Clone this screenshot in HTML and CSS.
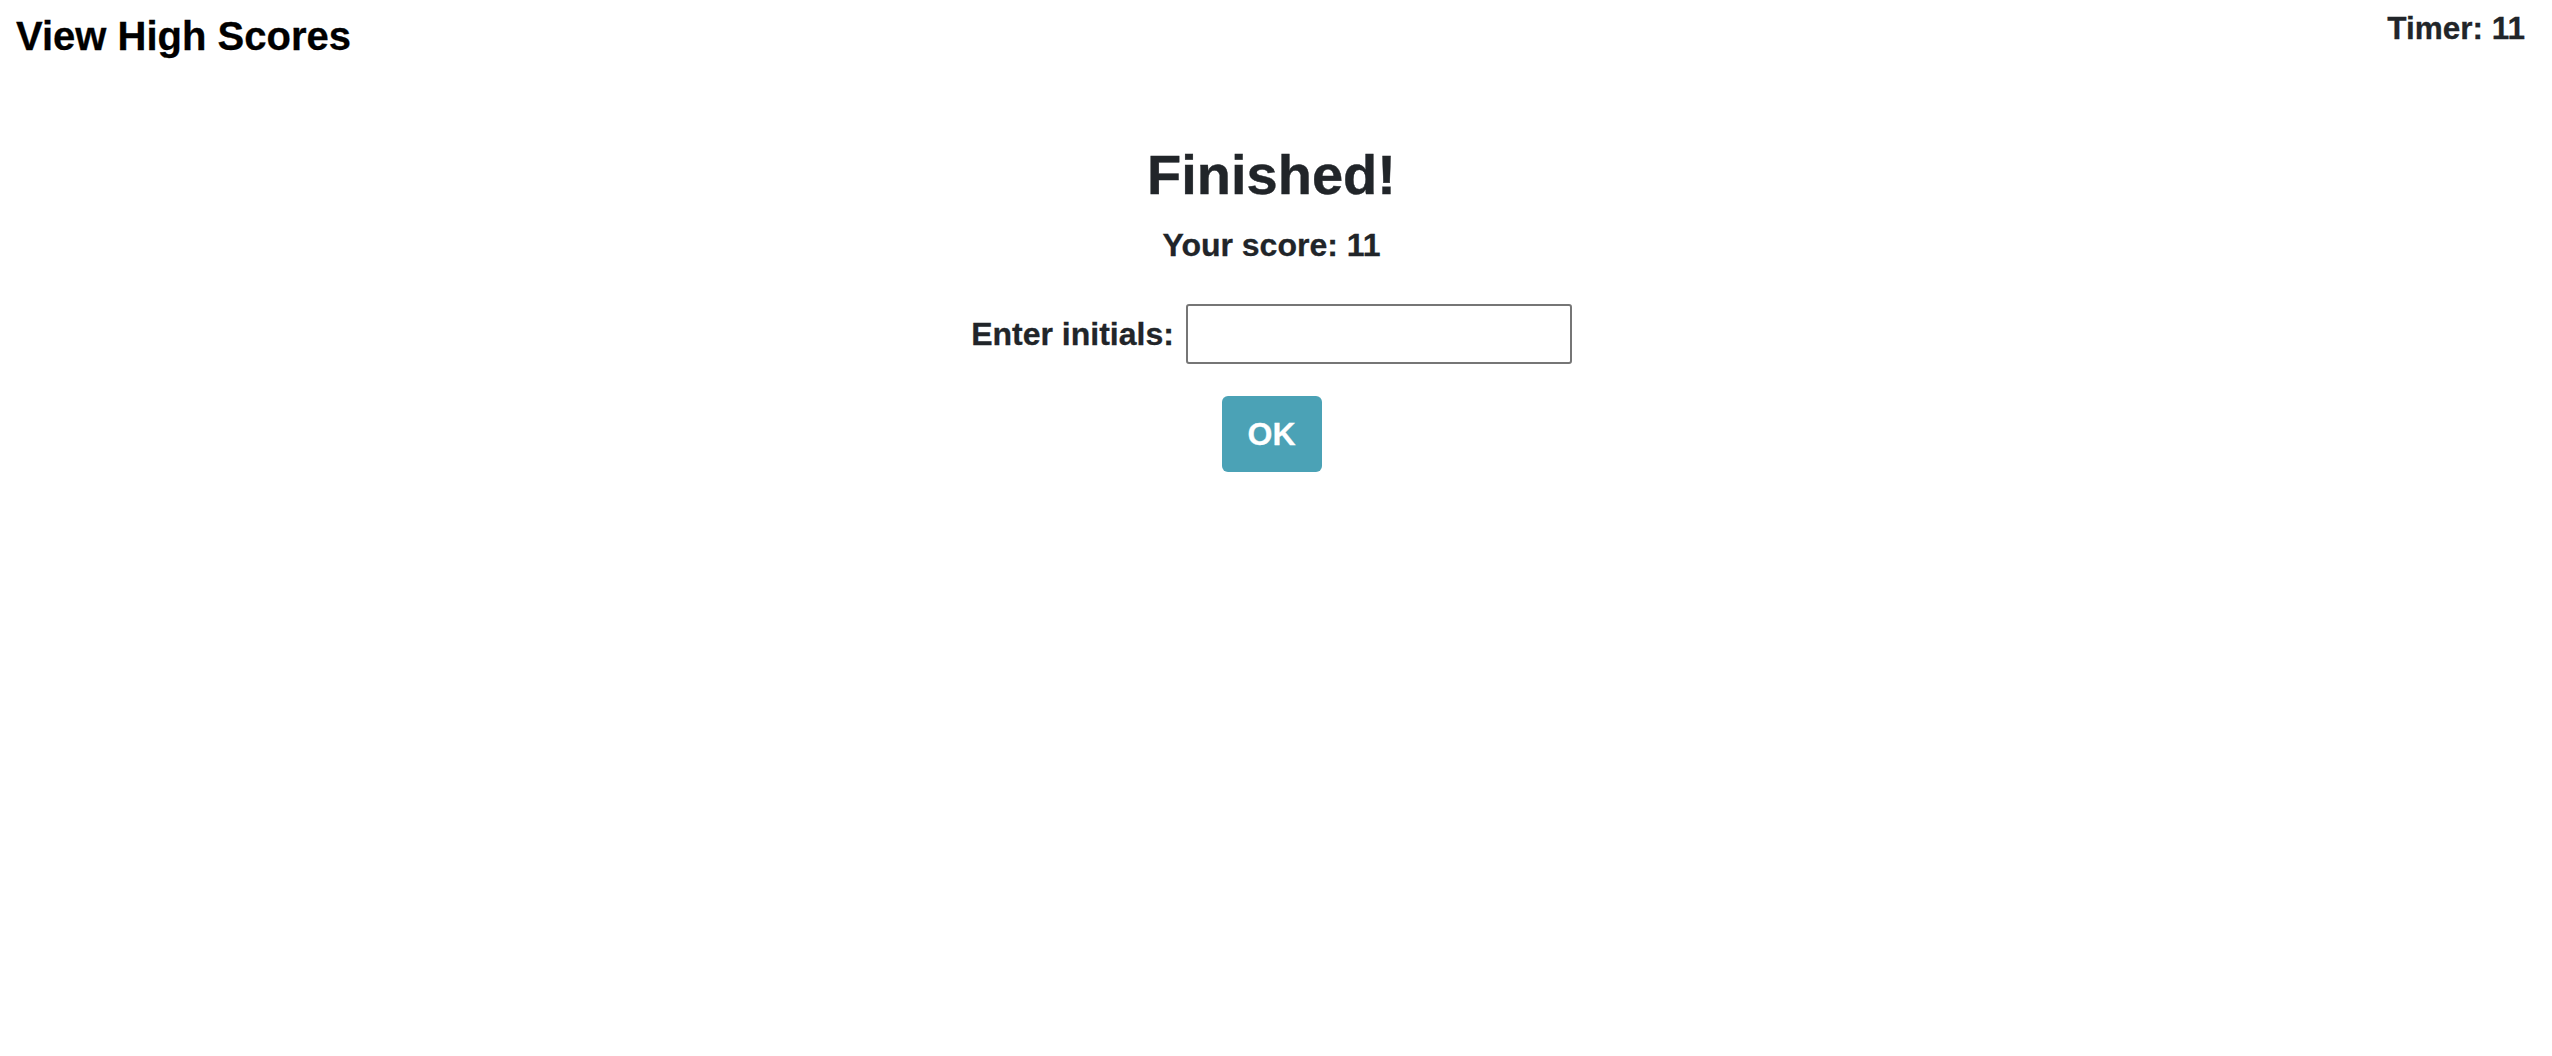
FILE: index.html
```html
<!DOCTYPE html>
<html lang="en">
<head>
<meta charset="utf-8">
<title>Quiz</title>
<link rel="stylesheet" href="styles.css">
</head>
<body>
<header class="topbar">
  <a class="brand">View High Scores</a>
  <div class="timer">Timer: 11</div>
</header>
<main class="result">
  <h1 class="result-title">Finished!</h1>
  <p class="result-score">Your score: 11</p>
  <form class="initials-row">
    <label class="initials-label" for="initials">Enter initials:</label>
    <input class="initials-input" id="initials" type="text">
  </form>
  <button class="ok-btn" type="button">OK</button>
</main>
</body>
</html>
```
FILE: styles.css
```css
html, body {
  margin: 0;
  padding: 0;
  background: #fff;
}
body {
  font-family: "Liberation Sans", Arial, sans-serif;
  font-weight: 700;
  color: #212529;
}
.topbar {
  display: flex;
  justify-content: space-between;
  align-items: flex-start;
  padding: 0 27px 0 16px;
}
.brand {
  display: block;
  margin-top: 16px;
  font-size: 40px;
  line-height: 1;
  color: #000;
  -webkit-text-stroke: 0.3px #000;
}
.timer {
  margin-top: 13px;
  font-size: 31.5px;
  line-height: 1;
  color: #212529;
  -webkit-text-stroke: 0.3px #212529;
}
.result {
  display: flex;
  flex-direction: column;
  align-items: center;
  padding-right: 9px;
}
.result-title {
  margin: 91px 0 0;
  font-size: 56px;
  line-height: 1;
  font-weight: 700;
  -webkit-text-stroke: 0.4px #212529;
}
.result-score {
  margin: 26px 0 0;
  font-size: 32px;
  line-height: 1;
  -webkit-text-stroke: 0.3px #212529;
}
.initials-row {
  display: flex;
  align-items: center;
  gap: 12px;
  margin: 43px 0 0;
}
.initials-label {
  font-size: 32px;
  line-height: 1;
  -webkit-text-stroke: 0.3px #212529;
}
.initials-input {
  box-sizing: border-box;
  width: 386px;
  height: 60px;
  margin: 0;
  border: 2px solid #767676;
  border-radius: 3px;
  background: #fff;
  font-size: 24px;
}
.ok-btn {
  margin-top: 32px;
  width: 100px;
  height: 76px;
  padding: 0;
  border: none;
  border-radius: 6px;
  background: #4ba2b6;
  color: #fff;
  font-family: "Liberation Sans", Arial, sans-serif;
  font-weight: 700;
  font-size: 32px;
  line-height: 1;
  -webkit-text-stroke: 0.3px #fff;
}
```
